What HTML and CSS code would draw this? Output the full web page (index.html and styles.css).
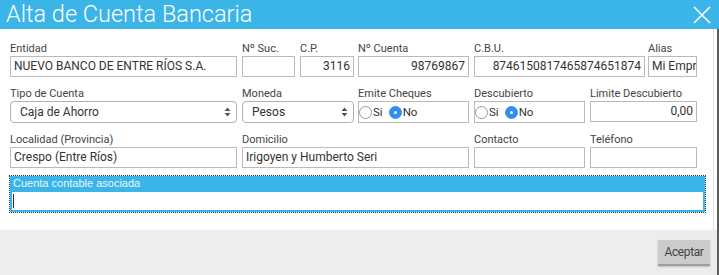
FILE: index.html
```html
<!DOCTYPE html>
<html>
<head>
    <meta charset="utf-8" />
    <title>Alta de Cuenta Bancaria</title>
    <link rel="stylesheet" href="styles.css">
</head>
<body>
    <div id="dialog">
        <div id="titlebar">
            <span id="title">Alta de Cuenta Bancaria</span>
            <svg id="close" width="18" height="18" viewBox="0 0 18 18">
                <path d="M1 1 L17 17 M17 1 L1 17" stroke="#ffffff" stroke-width="1.6" fill="none" />
            </svg>
        </div>
        <div id="content">
            <div id="form">
                <div class="row">
                    <div class="field w-entidad">
                        <label>Entidad</label>
                        <div class="input">NUEVO BANCO DE ENTRE RÍOS S.A.</div>
                    </div>
                    <div class="field w-suc">
                        <label>Nº Suc.</label>
                        <div class="input"></div>
                    </div>
                    <div class="field w-cp">
                        <label>C.P.</label>
                        <div class="input num">3116</div>
                    </div>
                    <div class="field w-cuenta">
                        <label>Nº Cuenta</label>
                        <div class="input num">98769867</div>
                    </div>
                    <div class="field w-cbu">
                        <label>C.B.U.</label>
                        <div class="input num">8746150817465874651874</div>
                    </div>
                    <div class="field w-alias">
                        <label>Alias</label>
                        <div class="input clip">Mi Empresa</div>
                    </div>
                </div>

                <div class="row">
                    <div class="field w-entidad">
                        <label>Tipo de Cuenta</label>
                        <div class="select">
                            <span>Caja de Ahorro</span>
                            <svg class="arrows" width="7" height="10" viewBox="0 0 7 10">
                                <path d="M0.5 4 L3.5 0.5 L6.5 4 Z M0.5 6 L3.5 9.5 L6.5 6 Z" fill="#555555" />
                            </svg>
                        </div>
                    </div>
                    <div class="field w-moneda">
                        <label>Moneda</label>
                        <div class="select">
                            <span>Pesos</span>
                            <svg class="arrows" width="7" height="10" viewBox="0 0 7 10">
                                <path d="M0.5 4 L3.5 0.5 L6.5 4 Z M0.5 6 L3.5 9.5 L6.5 6 Z" fill="#555555" />
                            </svg>
                        </div>
                    </div>
                    <div class="field w-cuenta">
                        <label>Emite Cheques</label>
                        <div class="radios">
                            <span class="radio"></span><span class="rlabel">Si</span>
                            <span class="radio checked"></span><span class="rlabel">No</span>
                        </div>
                    </div>
                    <div class="field w-desc">
                        <label>Descubierto</label>
                        <div class="radios">
                            <span class="radio"></span><span class="rlabel">Si</span>
                            <span class="radio checked"></span><span class="rlabel">No</span>
                        </div>
                    </div>
                    <div class="field w-limite">
                        <label>Limite Descubierto</label>
                        <div class="input num">0,00</div>
                    </div>
                </div>

                <div class="row">
                    <div class="field w-entidad">
                        <label>Localidad (Provincia)</label>
                        <div class="input">Crespo (Entre Ríos)</div>
                    </div>
                    <div class="field w-domicilio">
                        <label>Domicilio</label>
                        <div class="input">Irigoyen y Humberto Seri</div>
                    </div>
                    <div class="field w-desc">
                        <label>Contacto</label>
                        <div class="input"></div>
                    </div>
                    <div class="field w-limite">
                        <label>Teléfono</label>
                        <div class="input"></div>
                    </div>
                </div>

                <div id="asociada">
                    <div id="asociadaLabel">Cuenta contable asociada</div>
                    <div id="asociadaInput"><span class="caret"></span></div>
                </div>
            </div>
            <div id="footer">
                <div id="aceptar">Aceptar</div>
            </div>
        </div>
    </div>
</body>
</html>
```

FILE: styles.css
```css
*
{
    box-sizing: border-box;
}

body
{
    margin: 0;
    font-family: Roboto, 'Liberation Sans', sans-serif;
    background: #ffffff;
}

#dialog
{
    width: 719px;
    height: 275px;
    display: flex;
    flex-direction: column;
    overflow: hidden;
}

#titlebar
{
    height: 29px;
    background: #3bb4e7;
    display: flex;
    align-items: center;
    justify-content: space-between;
    padding-left: 6px;
    padding-right: 8px;
}

#title
{
    color: #ffffff;
    font-size: 23.5px;
    font-weight: 300;
    line-height: 29px;
}

#close
{
    margin-top: 1px;
}

#content
{
    flex: 1;
    display: flex;
    flex-direction: column;
    border-right: 2px solid #5b5b5b;
}

#form
{
    height: 201px;
    padding: 12px 0 0 10px;
    margin-right: 3px;
    border-right: 1px solid #e2e2e2;
}

.row
{
    display: flex;
    gap: 5px;
    margin-bottom: 9px;
}

.field
{
    display: flex;
    flex-direction: column;
}

.field label
{
    font-size: 11px;
    line-height: 15px;
    color: #444444;
    white-space: nowrap;
}

.w-entidad { width: 227px; }
.w-suc { width: 53px; }
.w-cp { width: 54px; margin-right: -1px; }
.w-cuenta { width: 111px; }
.w-cbu { width: 171px; }
.w-alias { width: 49px; margin-left: -2px; }
.w-moneda { width: 112px; margin-right: -1px; }
.w-desc { width: 111px; }
.w-limite { width: 107px; }
.w-domicilio { width: 227px; }

.input
{
    height: 21px;
    border: 1px solid #bababa;
    background: #ffffff;
    font-size: 12px;
    line-height: 19px;
    color: #333333;
    padding: 0 3px;
    white-space: nowrap;
    overflow: hidden;
}

.input.num
{
    text-align: right;
    direction: rtl;
}

.select
{
    height: 22px;
    border: 1px solid #b0b0b0;
    border-radius: 4px;
    background: #ffffff;
    font-size: 12px;
    color: #333333;
    display: flex;
    align-items: center;
    justify-content: space-between;
    padding: 0 5px 0 9px;
}

.radios
{
    height: 22px;
    border: 1px solid #bababa;
    display: flex;
    align-items: center;
    font-size: 11.5px;
    color: #333333;
}

.radio
{
    width: 13px;
    height: 13px;
    border-radius: 50%;
    border: 1px solid #9a9a9a;
    background: #ffffff;
    position: relative;
}

.radio.checked
{
    border-color: #2f8ef5;
    background: #2f8ef5;
    margin-left: 6px;
}

.radio.checked:after
{
    content: '';
    position: absolute;
    left: 4px;
    top: 4px;
    width: 3px;
    height: 3px;
    border-radius: 50%;
    background: #ffffff;
}

.rlabel
{
    margin-left: 1px;
}

#asociada
{
    width: 695px;
    margin-top: -1px;
    background: #3bb4e7;
    padding: 0 2px 2px 2px;
    outline: 1px dotted #1d3a4a;
    outline-offset: 0;
}

#asociadaLabel
{
    font-family: 'Liberation Sans', sans-serif;
    font-size: 11px;
    line-height: 15px;
    color: #e9f7fd;
    padding-left: 1px;
    margin-bottom: 1px;
}

#asociadaInput
{
    height: 18px;
    background: #ffffff;
    padding: 2px 0 0 1px;
}

.caret
{
    display: block;
    width: 1px;
    height: 14px;
    background: #333333;
}

#footer
{
    flex: 1;
    background: #ededed;
    display: flex;
    justify-content: flex-end;
    align-items: flex-start;
    padding: 10px 7px 0 0;
}

#aceptar
{
    width: 52px;
    height: 26px;
    background: #cccccc;
    border-bottom: 2px solid #9e9e9e;
    box-shadow: 0 1px 2px rgba(0, 0, 0, 0.2);
    font-size: 12px;
    letter-spacing: -0.4px;
    color: #444444;
    text-align: center;
    line-height: 25px;
}
```
